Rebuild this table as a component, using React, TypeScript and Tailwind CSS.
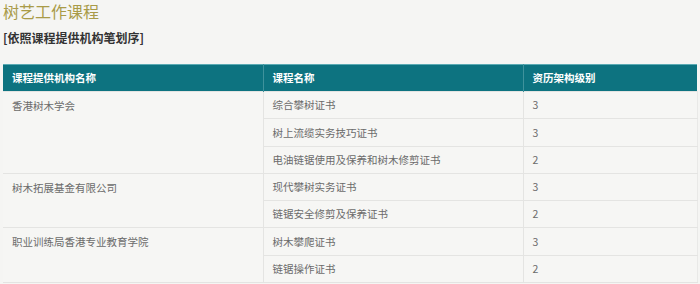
const rows = [
  { org: '香港树木学会', span: 3, course: '综合攀树证书', level: '3' },
  { course: '树上流缆实务技巧证书', level: '3' },
  { course: '电油链锯使用及保养和树木修剪证书', level: '2' },
  { org: '树木拓展基金有限公司', span: 2, course: '现代攀树实务证书', level: '3' },
  { course: '链锯安全修剪及保养证书', level: '2' },
  { org: '职业训练局香港专业教育学院', span: 2, course: '树木攀爬证书', level: '3' },
  { course: '链锯操作证书', level: '2' },
];

export default function App() {
  return (
    <div
      className="w-[700px] h-[284px] overflow-hidden bg-[#f5f5f3] pl-[3px] pr-[3px] pt-[1px]"
      style={{ fontFamily: '"Noto Sans CJK SC", "Noto Sans", sans-serif' }}
    >
      <div className="h-[20px] leading-[20px] text-[16px] text-[#a99b48]">树艺工作课程</div>
      <div className="mt-[9px] h-[16px] leading-[16px] text-[12px] font-bold text-[#333333]">
        [依照课程提供机构笔划序]
      </div>
      <table className="mt-[18px] w-[694px] table-fixed border-collapse text-[10.5px]">
        <colgroup>
          <col className="w-[260px]" />
          <col className="w-[260px]" />
          <col className="w-[174px]" />
        </colgroup>
        <thead>
          <tr className="h-[27px] bg-[#0d7380] text-white font-bold border-t border-[#5aaab3]">
            <th className="text-left px-[9px] border-r border-[#3f929c] font-bold">课程提供机构名称</th>
            <th className="text-left px-[9px] border-r border-[#3f929c] font-bold">课程名称</th>
            <th className="text-left px-[9px] font-bold">资历架构级别</th>
          </tr>
        </thead>
        <tbody className="text-[#6b6b6b] bg-[#f6f6f4]">
          {rows.map((r, i) => (
            <tr key={i} className="h-[27.3px]">
              {r.org && (
                <td
                  rowSpan={r.span}
                  className="align-top px-[9px] pt-[6px] border border-[#e4e4e2] border-l-0"
                >
                  {r.org}
                </td>
              )}
              <td className="px-[9px] border border-[#e4e4e2]">{r.course}</td>
              <td className="px-[9px] border border-[#e4e4e2] border-r-[#e9e9e7]">{r.level}</td>
            </tr>
          ))}
        </tbody>
      </table>
    </div>
  );
}
